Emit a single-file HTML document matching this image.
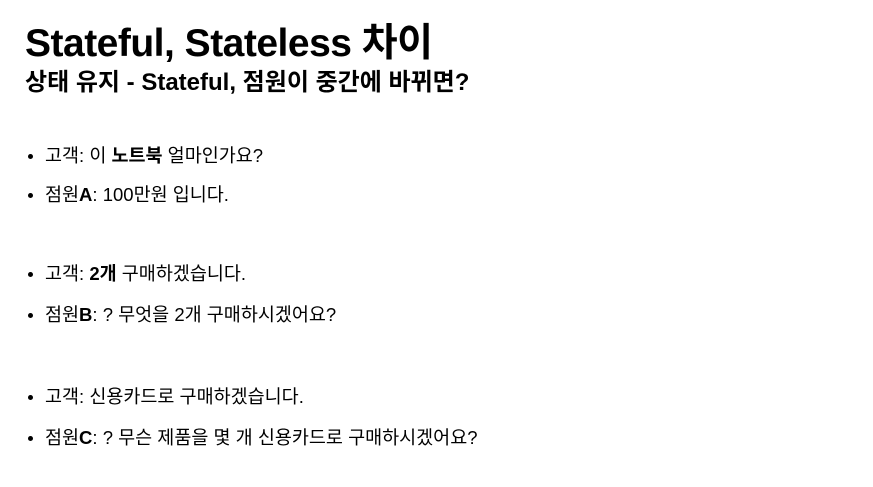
<!DOCTYPE html><html><head><meta charset="utf-8"><style>
body{margin:0;background:#fff;color:#000;font-family:"Liberation Sans","Noto Sans CJK KR",sans-serif;}
.t{position:absolute;left:25px;top:20px;font-size:39px;font-weight:bold;line-height:48px;letter-spacing:-0.5px;white-space:nowrap}
.s{position:absolute;left:25px;top:67px;font-size:24px;font-weight:bold;line-height:32px;white-space:nowrap}
.l{position:absolute;left:45px;font-size:18.5px;line-height:22px;white-space:nowrap}
.l:before{content:"";position:absolute;left:-17px;top:9px;width:5px;height:5px;border-radius:50%;background:#000}
</style></head><body>
<div class="t">Stateful, Stateless 차이</div>
<div class="s">상태 유지 - Stateful, 점원이 중간에 바뀌면?</div>
<div class="l" style="top:145px">고객: 이 <b>노트북</b> 얼마인가요?</div>
<div class="l" style="top:184px">점원<b>A</b>: 100만원 입니다.</div>
<div class="l" style="top:263px">고객: <b>2개</b> 구매하겠습니다.</div>
<div class="l" style="top:304px">점원<b>B</b>: ? 무엇을 2개 구매하시겠어요?</div>
<div class="l" style="top:386px">고객: 신용카드로 구매하겠습니다.</div>
<div class="l" style="top:427px">점원<b>C</b>: ? 무슨 제품을 몇 개 신용카드로 구매하시겠어요?</div>
</body></html>
